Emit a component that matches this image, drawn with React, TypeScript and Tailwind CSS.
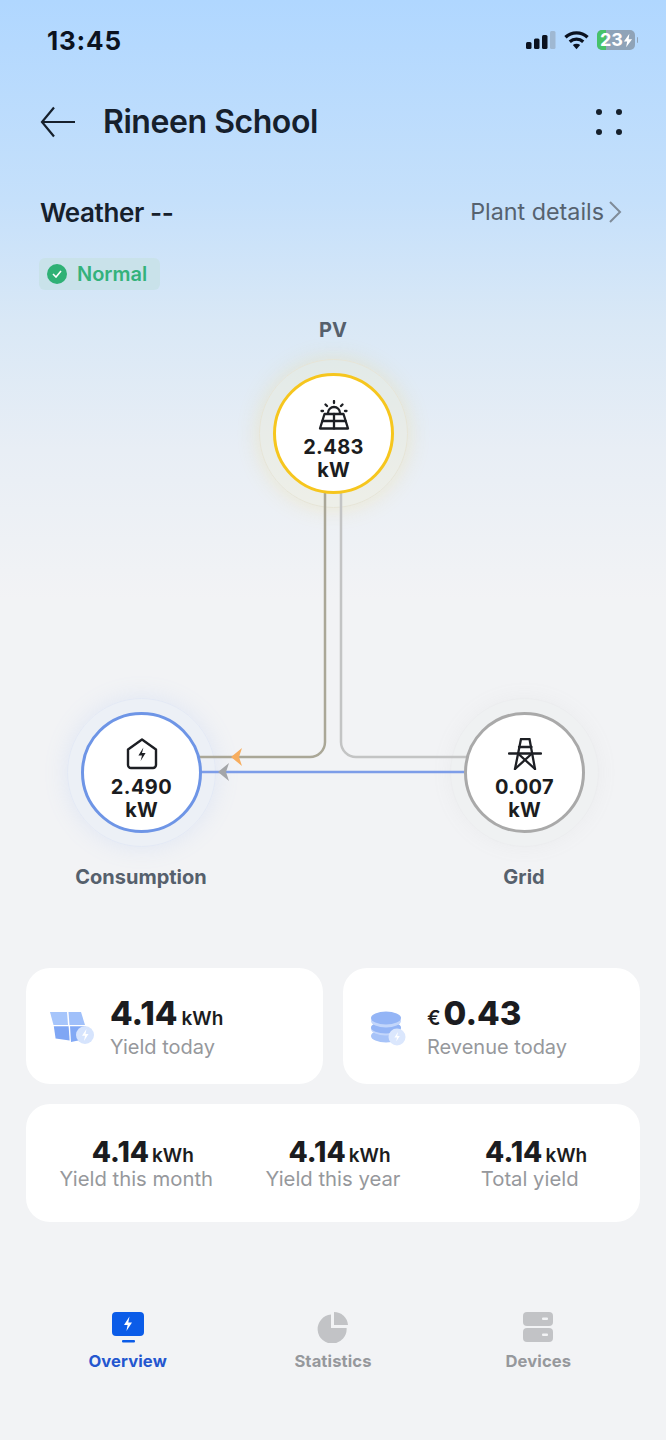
import { ReactNode } from 'react';

function SignalIcon() {
  return (
    <svg width="30" height="18" viewBox="0 0 30 18">
      <rect x="0" y="11" width="5.5" height="7" rx="1.5" fill="#0b1220" />
      <rect x="8" y="7.5" width="5.5" height="10.5" rx="1.5" fill="#0b1220" />
      <rect x="16" y="4" width="5.5" height="14" rx="1.5" fill="#0b1220" />
      <rect x="24" y="0" width="5.5" height="18" rx="1.5" fill="#9fb8d2" />
    </svg>
  );
}

function WifiIcon() {
  return (
    <svg width="25" height="20" viewBox="0 0 26 20" fill="none" stroke="#0b1220" strokeWidth="3.4">
      <path d="M1.5 7.2C8 1 18 1 24.5 7.2" />
      <path d="M6 11.8c4-3.6 10-3.6 14 0" />
      <path d="M13 19.5l-3.8-4.2c2.2-1.7 5.4-1.7 7.6 0z" fill="#0b1220" stroke="none" />
    </svg>
  );
}

function Battery() {
  return (
    <div className="flex items-center gap-[1.5px]">
      <div className="relative flex h-[20px] w-[38px] items-center overflow-hidden rounded-[5px] bg-[#8fa3b8]">
        <div className="absolute inset-y-0 left-0 w-[9px] bg-[#46c26a]" />
        <span className="relative ml-[3px] text-[18px] leading-none font-bold text-white">23</span>
        <svg className="relative" width="10" height="15" viewBox="0 0 11 15">
          <path d="M7 0L1 8.5h3.6L3.4 15 10 6H6.2z" fill="#ffffff" />
        </svg>
      </div>
      <div className="h-[6px] w-[1.5px] rounded-r bg-[#8fa3b8]" />
    </div>
  );
}

function BackArrow() {
  return (
    <svg width="36" height="32" viewBox="0 0 36 32" fill="none" stroke="#16202c" strokeWidth="2.2">
      <path d="M35 16H2" />
      <path d="M14 1.5L2 16l12 14.5" />
    </svg>
  );
}

function SolarIcon() {
  return (
    <svg width="32" height="30" viewBox="0 0 32 30" fill="none" stroke="#1d1f24" strokeWidth="2.3" strokeLinejoin="round" strokeLinecap="round">
      <path d="M10 13a6 6 0 0 1 12 0" />
      <path d="M16 1v2M7.5 4.5l1.5 1.5M24.5 4.5L23 6M3.5 11h1.5M27 11h1.5" />
      <path d="M6.5 14h19l4.5 14.5H2z" />
      <path d="M16 14v14.5M4.5 21h23" />
    </svg>
  );
}

function HouseIcon() {
  return (
    <svg width="32" height="32" viewBox="0 0 32 32" fill="none" stroke="#1d1f24" strokeWidth="2.4" strokeLinejoin="round">
      <path d="M2 11.5L16 1.5l14 10V27a3 3 0 0 1-3 3H5a3 3 0 0 1-3-3z" />
      <path d="M17.4 9.5l-5 8h3.6L14.6 23l5-8h-3.6z" fill="#1d1f24" stroke="none" />
    </svg>
  );
}

function PylonIcon() {
  return (
    <svg width="34" height="32" viewBox="0 0 34 32" fill="none" stroke="#1d1f24" strokeWidth="2.3" strokeLinejoin="round" strokeLinecap="round">
      <path d="M13 1h8.5L27 31M13 1L7 31" />
      <path d="M1 15.5h32" />
      <path d="M11 9h12.5M10 15.5L27 31M24 15.5L7 31" />
    </svg>
  );
}

function PanelBadgeIcon() {
  return (
    <svg width="46" height="36" viewBox="0 0 46 36">
      <path d="M1 2h17l1 13H4.5z" fill="#a6c5fb" />
      <path d="M19.5 2H32l4 13H20.5z" fill="#a0c0fa" />
      <path d="M4.8 16.2H19.6l1 14.3-14-2z" fill="#7fa6f4" />
      <path d="M21 16.2h15.5l2.5 12.3-17 3.4z" fill="#82a9f5" />
      <circle cx="36" cy="25" r="9" fill="#d6e4fd" />
      <path d="M37.5 19l-4.5 6.8h3L35 31l4.5-7h-3z" fill="#ffffff" />
    </svg>
  );
}

function CoinsBadgeIcon() {
  return (
    <svg width="44" height="36" viewBox="0 0 44 36">
      <ellipse cx="20" cy="26" rx="15" ry="6.5" fill="#a7c3f8" />
      <ellipse cx="20" cy="19" rx="15" ry="6.5" fill="#c3d6fb" />
      <ellipse cx="20" cy="17.5" rx="15" ry="6" fill="#94b5f6" />
      <ellipse cx="20" cy="11" rx="15" ry="6.5" fill="#c3d6fb" />
      <ellipse cx="20" cy="8" rx="15" ry="6.5" fill="#94b5f6" />
      <circle cx="31" cy="27" r="8.5" fill="#dbe7fd" />
      <path d="M32 22l-3.6 5.4h2.6l-.8 4 3.6-5.4h-2.6z" fill="#ffffff" />
    </svg>
  );
}

function FlowLines() {
  return (
    <svg className="absolute inset-0 z-[1]" width="666" height="600" viewBox="0 310 666 600" fill="none">
      <path d="M325 490V742a15 15 0 0 1-15 15H198" stroke="#aaa797" strokeWidth="2.5" />
      <path d="M341 490V742a15 15 0 0 0 15 15H468" stroke="#c3c4c4" strokeWidth="2.5" />
      <path d="M198 772H468" stroke="#7d9de8" strokeWidth="2.5" />
      <path d="M231 757l11-9-3 9 3 9z" fill="#f7ad5e" />
      <path d="M218 772l11-9-3 9 3 9z" fill="#a3a5a8" />
    </svg>
  );
}

export default function App() {
  return (
    <div className="relative h-[1440px] w-[666px] overflow-hidden bg-[linear-gradient(180deg,#b0d7ff_0px,#c5e0fb_200px,#d9e8f6_320px,#e8eef5_450px,#f2f3f5_600px,#f2f3f5_100%)] font-['Inter',sans-serif] text-[#16202c]">
      {/* status bar */}
      <div className="flex h-[80px] items-center justify-between pr-[28px] pl-[47px]">
        <span className="text-[26px] font-bold tracking-[0.8px] text-[#0b1220]">13:45</span>
        <div className="flex items-center gap-[8px]">
          <SignalIcon />
          <WifiIcon />
          <Battery />
        </div>
      </div>

      {/* header */}
      <div className="flex h-[84px] items-center justify-between pr-[44px] pl-[40px]">
        <div className="flex items-center gap-[27px]">
          <BackArrow />
          <h1 className="text-[32px] font-semibold tracking-[-0.45px]">Rineen School</h1>
        </div>
        <div className="grid grid-cols-2 gap-x-[14px] gap-y-[14px]">
          <span className="h-[6px] w-[6px] rounded-full bg-[#16202c]" />
          <span className="h-[6px] w-[6px] rounded-full bg-[#16202c]" />
          <span className="h-[6px] w-[6px] rounded-full bg-[#16202c]" />
          <span className="h-[6px] w-[6px] rounded-full bg-[#16202c]" />
        </div>
      </div>

      {/* weather row */}
      <div className="mt-[26px] flex h-[44px] items-center justify-between pr-[44px] pl-[40px]">
        <span className="text-[26px] font-semibold tracking-[-0.4px]">Weather --</span>
        <div className="flex items-center gap-[4px] text-[#56626f]">
          <span className="text-[23.3px]">Plant details</span>
          <svg width="14" height="22" viewBox="0 0 14 22" fill="none" stroke="#7f8b98" strokeWidth="2">
            <path d="M2 1l10 10L2 21" />
          </svg>
        </div>
      </div>

      {/* status badge */}
      <div className="mt-[24px] ml-[39px] flex h-[32px] w-[121px] items-center gap-[10px] rounded-[6px] bg-[#c9e2ea] pl-[8px]">
        <span className="flex h-[20px] w-[20px] items-center justify-center rounded-full bg-[#2fb175]">
          <svg width="10" height="8" viewBox="0 0 10 8" fill="none" stroke="#ffffff" strokeWidth="1.6">
            <path d="M1 4l3 3 5-6" />
          </svg>
        </span>
        <span className="text-[20px] font-semibold text-[#34b27b]">Normal</span>
      </div>

      {/* energy flow diagram */}
      <div className="relative mt-[20px] h-[600px] w-full">
        <FlowLines />
        <FlowNode className="top-[63px] left-[273px]" ring="border-[#f6c61e]" halo="border-[#e7e5d6] bg-[#f3e9b4]/20 shadow-[0_0_22px_rgba(245,205,70,0.22)]" value="2.483" icon={<SolarIcon />} />
        <FlowNode className="top-[402px] left-[81px]" ring="border-[#6e95e6]" halo="border-[#e3e9f5] bg-[#dde8fb]/25 shadow-[0_0_24px_rgba(130,170,245,0.16)]" value="2.490" icon={<HouseIcon />} />
        <FlowNode className="top-[402px] left-[464px]" ring="border-[#a9a9a9]" halo="border-[#ecedef] bg-[#e9eaec]/25 shadow-[0_0_20px_rgba(170,170,170,0.08)]" value="0.007" icon={<PylonIcon />} />
        <span className="absolute top-[5px] left-0 w-[666px] text-center text-[20px] font-bold text-[#56606c]">PV</span>
        <span className="absolute top-[552px] left-[41px] w-[200px] text-center text-[20px] font-bold text-[#56606c]">Consumption</span>
        <span className="absolute top-[552px] left-[424px] w-[200px] text-center text-[20px] font-bold text-[#56606c]">Grid</span>
      </div>

      {/* stat cards */}
      <div className="mt-[58px] flex gap-[20px] px-[26px]">
        <SmallCard icon={<PanelBadgeIcon />} label="Yield today">
          <span className="text-[33px] leading-none font-extrabold text-[#1b1c20]">4.14</span>
          <span className="ml-[4px] text-[19px] leading-none font-semibold text-[#1b1c20]">kWh</span>
        </SmallCard>
        <SmallCard icon={<CoinsBadgeIcon />} label="Revenue today">
          <span className="mr-[3px] text-[20px] leading-none font-semibold text-[#1b1c20]">€</span>
          <span className="text-[33px] leading-none font-extrabold text-[#1b1c20]">0.43</span>
        </SmallCard>
      </div>

      <div className="mx-[26px] mt-[20px] grid h-[118px] grid-cols-3 items-center rounded-[24px] bg-white px-[12px] pt-[2px]">
        <TotalStat label="Yield this month" />
        <TotalStat label="Yield this year" />
        <TotalStat label="Total yield" />
      </div>

      {/* tab bar */}
      <div className="mt-[89px] grid grid-cols-3 px-[25px]">
        <Tab label="Overview" active>
          <svg width="34" height="32" viewBox="0 0 34 32">
            <rect x="1" y="1" width="32" height="24" rx="4" fill="#0b5ce8" />
            <path d="M18.5 5.5L13 14h3.6l-1.2 6 5.6-8.6h-3.7z" fill="#ffffff" />
            <rect x="11" y="29" width="13" height="2.5" rx="1" fill="#0b5ce8" />
          </svg>
        </Tab>
        <Tab label="Statistics">
          <svg width="34" height="32" viewBox="0 0 34 32">
            <path d="M15 3.6A14.5 14.5 0 1 0 30.6 17H15z" fill="#c2c3c6" />
            <path d="M18 1v13h14A14 14 0 0 0 18 1z" fill="#c2c3c6" />
          </svg>
        </Tab>
        <Tab label="Devices">
          <svg width="34" height="32" viewBox="0 0 34 32">
            <rect x="2" y="1" width="30" height="14" rx="4" fill="#c2c3c6" />
            <rect x="2" y="17" width="30" height="14" rx="4" fill="#c2c3c6" />
            <rect x="21" y="6.5" width="6" height="2.5" rx="1" fill="#f2f3f5" />
            <rect x="21" y="22.5" width="6" height="2.5" rx="1" fill="#f2f3f5" />
          </svg>
        </Tab>
      </div>
    </div>
  );
}

function FlowNode({ className, ring, halo, value, icon }: { className: string; ring: string; halo: string; value: string; icon: ReactNode }) {
  return (
    <div className={`absolute h-[121px] w-[121px] ${className}`}>
      <div className={`absolute inset-[-14px] rounded-full border ${halo}`} />
      <div className={`relative z-[2] flex h-full w-full flex-col items-center justify-center rounded-full border-[3px] bg-white pt-[14px] ${ring}`}>
        {icon}
        <span className="mt-[6px] text-[20px] leading-[23px] font-bold tracking-[0.4px] text-[#1b1c20]">{value}</span>
        <span className="text-[20px] leading-[23px] font-bold text-[#1b1c20]">kW</span>
      </div>
    </div>
  );
}

function SmallCard({ icon, label, children }: { icon: ReactNode; label: string; children: ReactNode }) {
  return (
    <div className="flex h-[116px] flex-1 items-center rounded-[24px] bg-white pt-[4px] pl-[23px]">
      <div className="flex w-[61px] shrink-0 items-center">{icon}</div>
      <div className="flex flex-col">
        <div className="flex items-baseline">{children}</div>
        <span className="mt-[5px] text-[20px] leading-[24px] text-[#96989c]">{label}</span>
      </div>
    </div>
  );
}

function TotalStat({ label }: { label: string }) {
  return (
    <div className="flex flex-col items-center">
      <div className="flex items-baseline pl-[13px]">
        <span className="text-[28px] leading-[30px] font-extrabold text-[#1b1c20]">4.14</span>
        <span className="ml-[3px] text-[19px] leading-[24px] font-semibold text-[#1b1c20]">kWh</span>
      </div>
      <span className="-mt-[2px] text-[20.3px] leading-[26px] text-[#96989c]">{label}</span>
    </div>
  );
}

function Tab({ label, active = false, children }: { label: string; active?: boolean; children: ReactNode }) {
  return (
    <div className="flex flex-col items-center">
      {children}
      <span className={`mt-[7px] text-[16.6px] leading-[22px] font-bold tracking-[0.1px] ${active ? 'text-[#2456cf]' : 'text-[#96989c]'}`}>{label}</span>
    </div>
  );
}
